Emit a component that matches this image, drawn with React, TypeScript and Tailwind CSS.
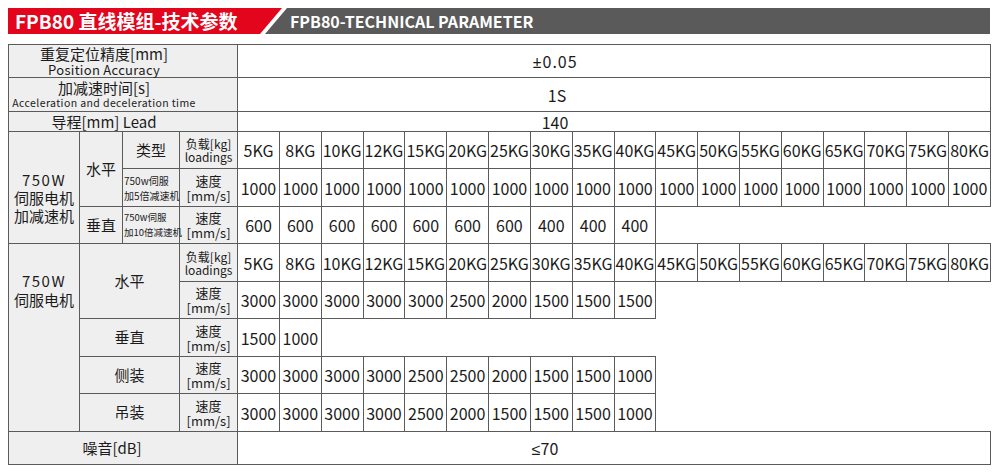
const B = "border border-[#5b5b5b]";
const L = "bg-[#efefef]";

const loads = ["5KG", "8KG", "10KG", "12KG", "15KG", "20KG", "25KG", "30KG", "35KG", "40KG", "45KG", "50KG", "55KG", "60KG", "65KG", "70KG", "75KG", "80KG"];
const speedG1 = Array(18).fill("1000");
const vertG1 = ["600", "600", "600", "600", "600", "600", "600", "400", "400", "400"];
const speedG2 = ["3000", "3000", "3000", "3000", "3000", "2500", "2000", "1500", "1500", "1500"];
const vertG2 = ["1500", "1000"];
const side = ["3000", "3000", "3000", "3000", "2500", "2500", "2000", "1500", "1500", "1000"];
const hang = ["3000", "3000", "3000", "3000", "2500", "2000", "1500", "1500", "1500", "1000"];

function Values({ items }: { items: string[] }) {
  return (
    <>
      {items.map((v, i) => (
        <td key={i} className={`${B} text-center text-[16px] whitespace-nowrap`}>
          {v}
        </td>
      ))}
      {items.length < 18 ? <td colSpan={18 - items.length} /> : null}
    </>
  );
}

function SpeedLabel() {
  return (
    <td className={`${B} ${L} text-center text-[13px] leading-[15px]`}>
      <div>速度</div>
      <div>[mm/s]</div>
    </td>
  );
}

function LoadLabel() {
  return (
    <td className={`${B} ${L} text-center text-[12px] leading-[13px]`}>
      <div>负载[kg]</div>
      <div>loadings</div>
    </td>
  );
}

export default function App() {
  return (
    <div className="min-h-[472px] w-[1000px] bg-white px-2 pt-2 font-['Noto_Sans_CJK_SC','Noto_Sans',sans-serif] text-[#1b1b1b]">
      <div className="flex h-[26px]">
        <div className="flex w-[274px] items-center bg-[#e3051b] pl-[7px] text-[19px] font-bold text-white [clip-path:polygon(0_0,100%_0,calc(100%_-_22px)_100%,0_100%)]">
          FPB80 直线模组-技术参数
        </div>
        <div className="-ml-[17px] flex w-[725px] items-center bg-[#5a5a5a] pl-[25px] text-[16px] font-bold text-white [clip-path:polygon(22px_0,100%_0,100%_100%,0_100%)]">
          FPB80-TECHNICAL PARAMETER
        </div>
      </div>

      <table className="mt-[10px] w-[982px] table-fixed border-collapse">
        <colgroup>
          <col className="w-[71px]" />
          <col className="w-[43px]" />
          <col className="w-[57px]" />
          <col className="w-[58px]" />
          {loads.map((l) => (
            <col key={l} className="w-[41.83px]" />
          ))}
        </colgroup>
        <tbody>
          <tr className="h-[33px]">
            <td colSpan={4} className={`${B} ${L} pr-[38px] text-center`}>
              <div className="text-[15px] leading-[16px]">重复定位精度[mm]</div>
              <div className="text-[13px] leading-[15px] tracking-[0.3px]">Position Accuracy</div>
            </td>
            <td colSpan={18} className={`${B} pr-[118px] text-center text-[16px] tracking-[1px]`}>
              <span className="font-['Noto_Sans',sans-serif]">±</span>0.05
            </td>
          </tr>
          <tr className="h-[34px]">
            <td colSpan={4} className={`${B} ${L} pr-[38px] text-center`}>
              <div className="text-[15px] leading-[17px]">加减速时间[s]</div>
              <div className="text-[10.5px] leading-[14px] tracking-[0.4px] whitespace-nowrap">
                Acceleration and deceleration time
              </div>
            </td>
            <td colSpan={18} className={`${B} pr-[114px] text-center text-[16px]`}>
              1S
            </td>
          </tr>
          <tr className="h-[20px]">
            <td colSpan={4} className={`${B} ${L} pr-[38px] text-center text-[15px] leading-[18px]`}>
              导程[mm] Lead
            </td>
            <td colSpan={18} className={`${B} pr-[118px] text-center text-[16px] leading-[18px]`}>
              140
            </td>
          </tr>

          <tr className="h-[37px]">
            <td rowSpan={3} className={`${B} ${L} pt-[20px] text-center text-[15px] leading-[18px]`}>
              <div className="tracking-[1.5px]">750W</div>
              <div>伺服电机</div>
              <div>加减速机</div>
            </td>
            <td rowSpan={2} className={`${B} ${L} text-center text-[15px]`}>
              水平
            </td>
            <td className={`${B} ${L} text-center text-[15px]`}>类型</td>
            <LoadLabel />
            <Values items={loads} />
          </tr>
          <tr className="h-[38px]">
            <td className={`${B} ${L} pl-px text-left text-[10px] leading-[15px] whitespace-nowrap`}>
              <div>750w伺服</div>
              <div>加5倍减速机</div>
            </td>
            <SpeedLabel />
            <Values items={speedG1} />
          </tr>
          <tr className="h-[37px]">
            <td className={`${B} ${L} text-center text-[15px]`}>垂直</td>
            <td className={`${B} ${L} pl-px text-left text-[9.5px] leading-[15px] whitespace-nowrap`}>
              <div>750w伺服</div>
              <div>加10倍减速机</div>
            </td>
            <SpeedLabel />
            <Values items={vertG1} />
          </tr>

          <tr className="h-[38px]">
            <td rowSpan={5} className={`${B} ${L} pt-[27px] text-center align-top text-[15px] leading-[19px]`}>
              <div className="tracking-[1.5px]">750W</div>
              <div>伺服电机</div>
            </td>
            <td colSpan={2} rowSpan={2} className={`${B} ${L} text-center text-[15px]`}>
              水平
            </td>
            <LoadLabel />
            <Values items={loads} />
          </tr>
          <tr className="h-[37px]">
            <SpeedLabel />
            <Values items={speedG2} />
          </tr>
          <tr className="h-[38px]">
            <td colSpan={2} className={`${B} ${L} text-center text-[15px]`}>
              垂直
            </td>
            <SpeedLabel />
            <Values items={vertG2} />
          </tr>
          <tr className="h-[37px]">
            <td colSpan={2} className={`${B} ${L} text-center text-[15px]`}>
              侧装
            </td>
            <SpeedLabel />
            <Values items={side} />
          </tr>
          <tr className="h-[38px]">
            <td colSpan={2} className={`${B} ${L} text-center text-[15px]`}>
              吊装
            </td>
            <SpeedLabel />
            <Values items={hang} />
          </tr>

          <tr className="h-[33px]">
            <td colSpan={4} className={`${B} ${L} pr-[22px] text-center text-[15px]`}>
              噪音[dB]
            </td>
            <td colSpan={18} className={`${B} pr-[138px] text-center text-[16px]`}>
              <span className="font-['Noto_Sans',sans-serif]">≤</span>70
            </td>
          </tr>
        </tbody>
      </table>
    </div>
  );
}
